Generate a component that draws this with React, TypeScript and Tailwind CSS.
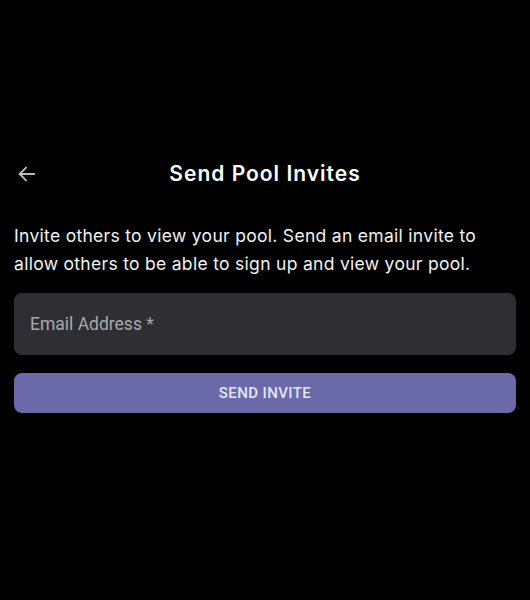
import React from 'react'

const BackArrow = () => (
  <svg width="22" height="22" viewBox="0 0 24 24" fill="none" stroke="#bdbdbd" strokeWidth="2" strokeLinecap="round" strokeLinejoin="round">
    <path d="M20 12H4" />
    <path d="M11 5l-7 7 7 7" />
  </svg>
)

export default function App() {
  return (
    <div className="w-[530px] h-[600px] bg-black text-white px-[14px] pt-[160px]" style={{ fontFamily: 'Inter, "Noto Sans", sans-serif' }}>
      {/* Header */}
      <div className="relative flex items-center justify-center h-[28px]">
        <button className="absolute left-[2px] top-[3px]">
          <BackArrow />
        </button>
        <h1 className="text-[21px] font-semibold tracking-[1px]">Send Pool Invites</h1>
      </div>

      {/* Description */}
      <p className="mt-[34px] text-[17.5px] leading-[28px] tracking-[0.3px] text-[#f2f2f2]">
        Invite others to view your pool. Send an email invite to allow others to be able to sign up and view your pool.
      </p>

      {/* Email field */}
      <div className="mt-[15px] h-[62px] rounded-[8px] bg-[#2f2e33] flex items-center px-[16px]">
        <span className="text-[17.5px] text-[#a9a8ad]" style={{ fontFamily: 'Roboto, sans-serif' }}>Email Address *</span>
      </div>

      {/* Button */}
      <button
        className="mt-[18px] w-full h-[40px] rounded-[8px] bg-[#6a6aab] text-[#e6e6f4] text-[15px] font-medium tracking-[0.4px]"
        style={{ fontFamily: 'Roboto, sans-serif' }}
      >
        SEND INVITE
      </button>
    </div>
  )
}
